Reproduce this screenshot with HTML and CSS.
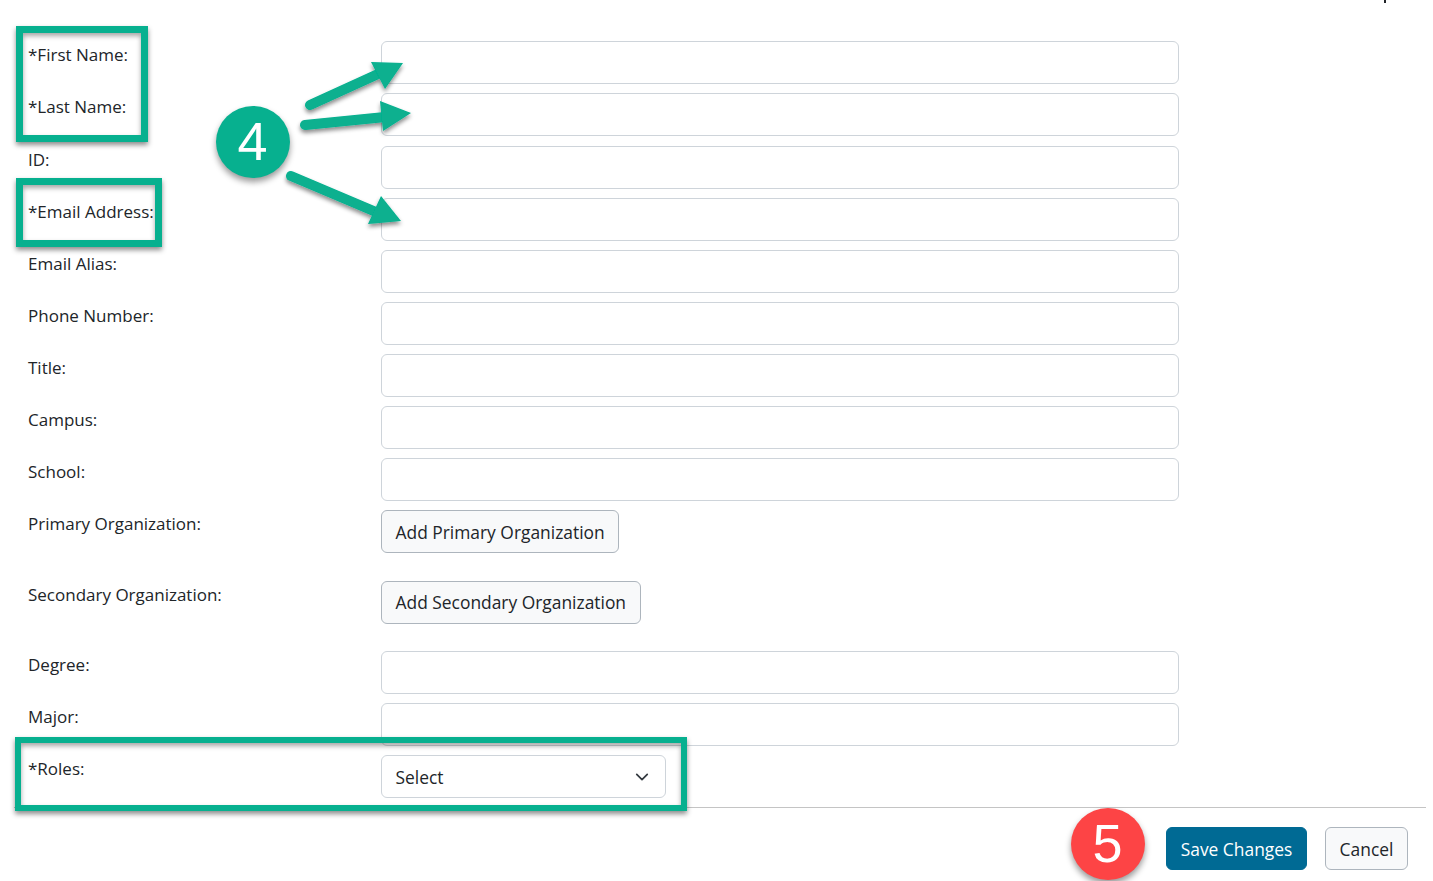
FILE: index.html
```html
<!DOCTYPE html>
<html lang="en">
  <head>
    <meta charset="UTF-8" />
    <meta name="viewport" content="width=device-width, initial-scale=1.0" />
    <title>Edit user</title>
    <link rel="stylesheet" href="styles.css">
  </head>
  <body>
    <span class="cut_mark"></span>
    <form class="user_form">
      <div class="row"><label>*First Name:</label><input type="text"></div>
      <div class="row"><label>*Last Name:</label><input type="text"></div>
      <div class="row"><label>ID:</label><input type="text"></div>
      <div class="row"><label>*Email Address:</label><input type="text"></div>
      <div class="row"><label>Email Alias:</label><input type="text"></div>
      <div class="row"><label>Phone Number:</label><input type="text"></div>
      <div class="row"><label>Title:</label><input type="text"></div>
      <div class="row"><label>Campus:</label><input type="text"></div>
      <div class="row"><label>School:</label><input type="text"></div>
      <div class="row row_org"><label>Primary Organization:</label><div><button type="button" class="btn">Add Primary Organization</button></div></div>
      <div class="row row_org"><label>Secondary Organization:</label><div><button type="button" class="btn">Add Secondary Organization</button></div></div>
      <div class="row"><label>Degree:</label><input type="text"></div>
      <div class="row"><label>Major:</label><input type="text"></div>
      <div class="row">
        <label>*Roles:</label>
        <div class="select">
          <span>Select</span>
          <svg width="14" height="14" viewBox="0 0 16 16"><path d="M2 5l6 6 6-6" fill="none" stroke="#343a40" stroke-width="2" stroke-linecap="round" stroke-linejoin="round"/></svg>
        </div>
      </div>
      <footer class="form_foot">
        <button type="button" class="btn btn_save">Save Changes</button>
        <button type="button" class="btn btn_cancel">Cancel</button>
      </footer>
    </form>

    <!-- callouts drawn over the form -->
    <div class="box box_names"></div>
    <div class="box box_email"></div>
    <div class="box box_roles"></div>
    <div class="step step_4">4</div>
    <div class="step step_5">5</div>
    <svg class="arrows" width="1433" height="881" viewBox="0 0 1433 881">
      <defs>
        <filter id="soft" x="-20%" y="-20%" width="140%" height="150%">
          <feDropShadow dx="0" dy="3" stdDeviation="2" flood-color="#000" flood-opacity="0.45"/>
        </filter>
      </defs>
      <g filter="url(#soft)" fill="#07b08f" stroke="#07b08f" stroke-linecap="round">
        <path d="M310 105L378 74" fill="none" stroke-width="10"/>
        <path d="M403 63L371 62L385 89Z" stroke="none"/>
        <path d="M305 125L385 117" fill="none" stroke-width="10"/>
        <path d="M411 113L380 101L383 131Z" stroke="none"/>
        <path d="M291 176L376 212" fill="none" stroke-width="10"/>
        <path d="M401 221L381 196L368 224Z" stroke="none"/>
      </g>
    </svg>
  </body>
</html>
```

FILE: styles.css
```css
* {
  margin: 0;
  padding: 0;
  box-sizing: border-box;
}
html,
body {
  height: 881px;
  overflow: hidden;
}
body {
  position: relative;
  background-color: white;
  color: #212529;
  font-family: "Open Sans", "Noto Sans", sans-serif;
  font-size: 17px;
}
.cut_mark {
  position: absolute;
  top: 0;
  left: 1384px;
  width: 2px;
  height: 3px;
  background-color: #212529;
}
.user_form {
  padding: 41.25px 7px 0 14px;
}
.row {
  display: grid;
  grid-template-columns: 367px 798px;
  min-height: 43px;
  margin-bottom: 9.13px;
}
.row label {
  padding-left: 14px;
  line-height: 28.4px;
}
.row_org {
  min-height: 61.17px;
}
.row input {
  height: 43px;
  border: 1px solid #ced4da;
  border-radius: 6px;
  background-color: white;
}
.select {
  display: flex;
  justify-content: space-between;
  align-items: center;
  width: 285px;
  height: 43px;
  padding: 0 16px 0 13.5px;
  border: 1px solid #ced4da;
  border-radius: 6px;
  font-size: 17.4px;
}
.btn {
  height: 43px;
  padding: 0 13.5px;
  border: 1px solid #adb5bd;
  border-radius: 6px;
  background-color: #f8f9fa;
  color: #212529;
  font: inherit;
  font-size: 17.4px;
}
.form_foot {
  display: flex;
  justify-content: flex-end;
  gap: 18px;
  padding: 19px 18px 0 0;
  border-top: 1px solid #c4c4c4;
}
.btn_save {
  width: 141px;
  padding: 0;
  border-color: #006a94;
  background-color: #006a94;
  color: white;
}
.btn_cancel {
  width: 83px;
  padding: 0;
}
.box {
  position: absolute;
  border: 7px solid #07b08f;
  box-shadow: 0 3px 5px rgba(0, 0, 0, 0.45), inset 0 3px 5px rgba(0, 0, 0, 0.35);
}
.box_names {
  top: 26px;
  left: 16px;
  width: 132px;
  height: 116px;
}
.box_email {
  top: 178px;
  left: 16px;
  width: 146px;
  height: 69px;
}
.box_roles {
  top: 737px;
  left: 15px;
  width: 672px;
  height: 74px;
  border-width: 6px;
}
.step {
  position: absolute;
  display: flex;
  justify-content: center;
  align-items: center;
  width: 74px;
  height: 72px;
  border-radius: 50%;
  color: white;
  font-family: "Liberation Sans", sans-serif;
  font-size: 54px;
  line-height: 1;
  box-shadow: 0 4px 6px rgba(0, 0, 0, 0.4);
}
.step_4 {
  top: 106px;
  left: 215.5px;
  padding-bottom: 2px;
  background-color: #07b08f;
}
.step_5 {
  top: 808px;
  left: 1070.5px;
  padding-bottom: 3px;
  background-color: #fd4445;
}
.arrows {
  position: absolute;
  top: 0;
  left: 0;
  pointer-events: none;
}
```
